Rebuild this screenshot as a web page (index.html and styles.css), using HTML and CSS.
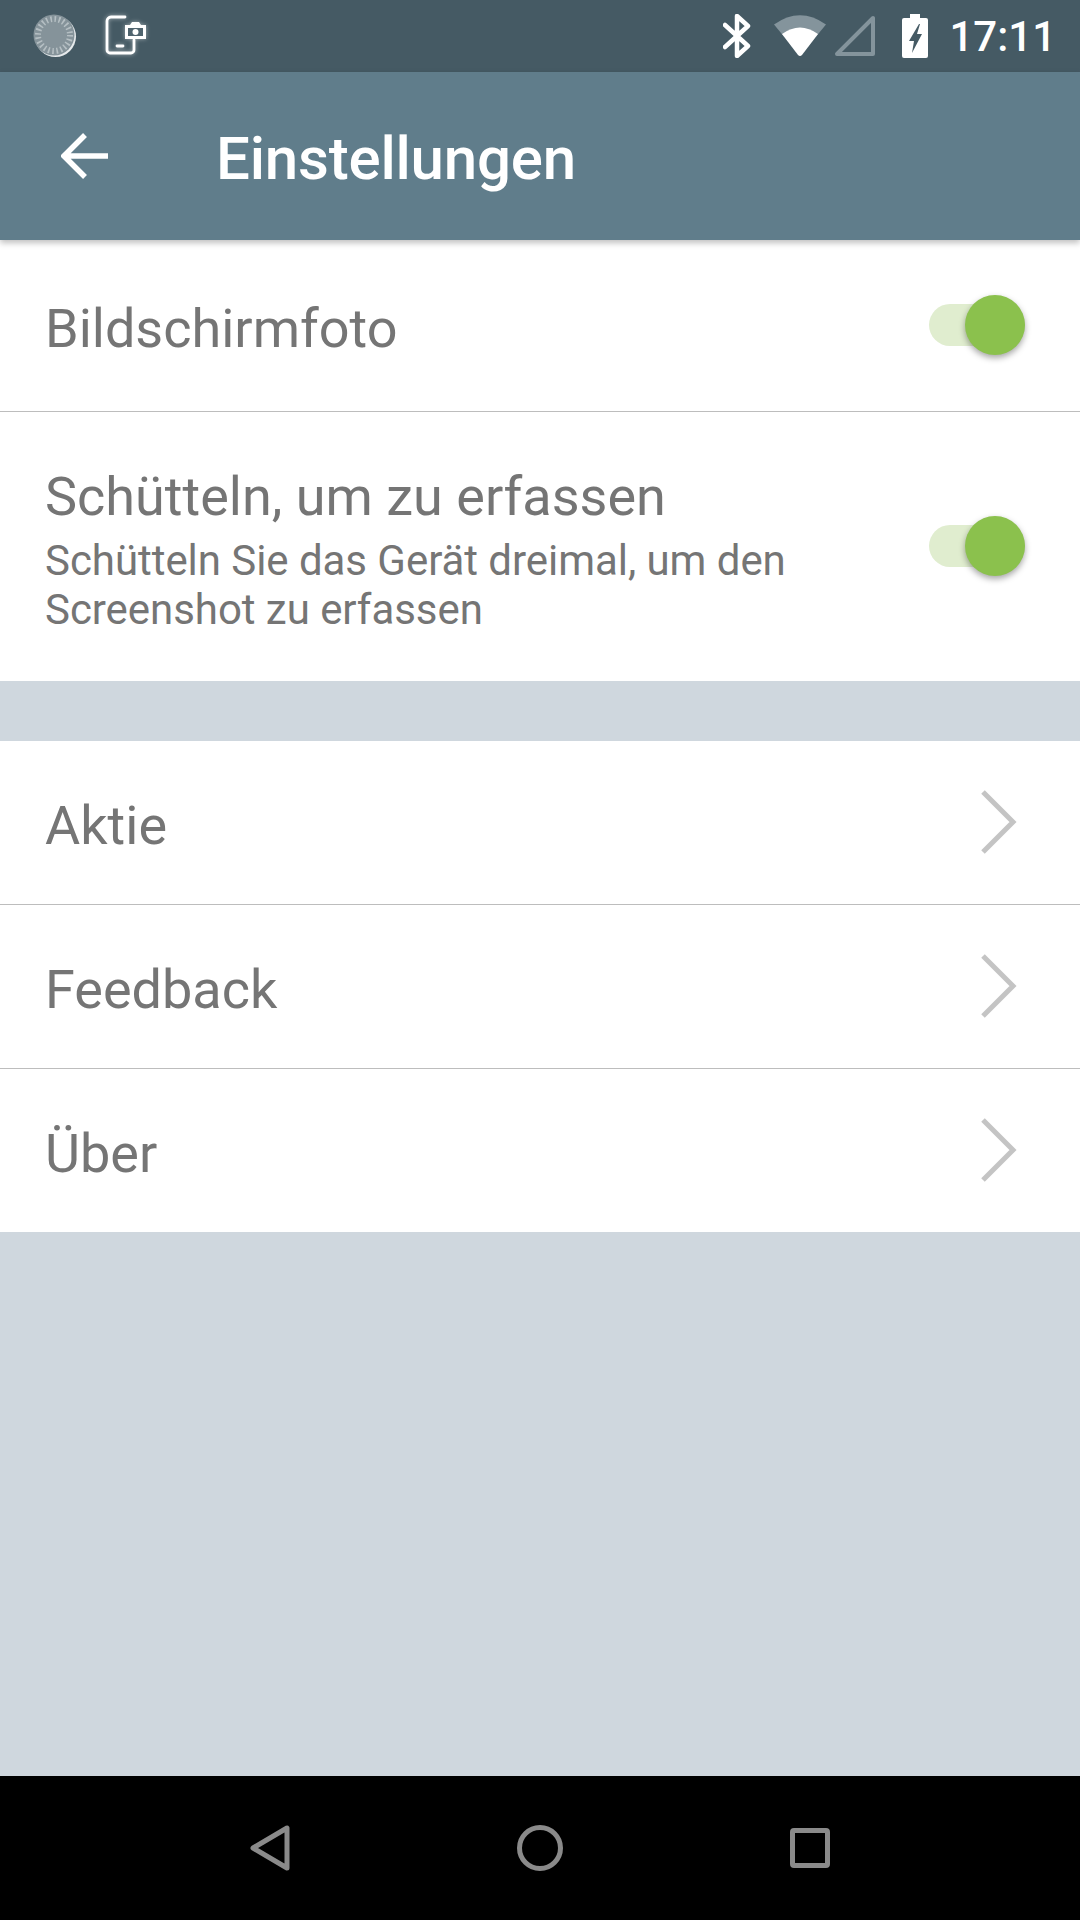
FILE: index.html
```html
<!DOCTYPE html>
<html lang="de">
<head>
    <meta charset="UTF-8">
    <meta name="viewport" content="width=device-width, initial-scale=1.0">
    <title>Einstellungen</title>
    <link rel="stylesheet" href="styles.css">
</head>
<body>
    <div class="screen">
        <div class="status-bar">
            <svg class="ic-spinner" width="44" height="44" viewBox="0 0 44 44">
                <circle cx="22.500" cy="22.500" r="20.500" fill="#e6eaec"/>
                <circle cx="21" cy="21" r="20.500" fill="#85939a"/>
                <circle cx="21" cy="21" r="16" fill="none" stroke="#b5bfc3" stroke-width="6" stroke-dasharray="1.600 2.590"/>
            </svg>
            <svg class="ic-shot" width="42" height="42" viewBox="0 0 42 42">
                <path d="M20 2H6a4 4 0 0 0-4 4v29a3 3 0 0 0 3 3h21a3 3 0 0 0 3-3V25" fill="none" stroke="#fff" stroke-width="2.800" stroke-linecap="round"/>
                <path d="M12 31h6" stroke="#fff" stroke-width="2.800" stroke-linecap="round"/>
                <path d="M20 10h5l2-3h7l2 3h5v14H20z" fill="#fff"/>
                <path d="M23 13h15v8H23z" fill="#4f646e"/>
                <circle cx="30.500" cy="17" r="3" fill="#fff"/>
            </svg>
            <div class="status-right">
                <svg class="ic-bt" width="28" height="44" viewBox="0 0 28 44">
                    <path d="M2 11l23 21-11 10V2l11 10L2 33" fill="none" stroke="#fff" stroke-width="4.500" stroke-linejoin="round" stroke-linecap="round"/>
                </svg>
                <svg class="ic-wifi" width="52" height="42" viewBox="0 0 52 42">
                    <path d="M0 9.500Q26-9 52 9.500L26 41z" fill="#84949c"/>
                    <path d="M8 19Q26 6 44 19L28 40q-2 2-4 0z" fill="#fff"/>
                </svg>
                <svg class="ic-signal" width="42" height="42" viewBox="0 0 42 42">
                    <path d="M39 3v36H3z" fill="none" stroke="#84949c" stroke-width="4" stroke-linejoin="round"/>
                </svg>
                <svg class="ic-batt" width="26" height="44" viewBox="0 0 26 44">
                    <path d="M8 0h10v4h6a2 2 0 0 1 2 2v36a2 2 0 0 1-2 2H2a2 2 0 0 1-2-2V6a2 2 0 0 1 2-2h6z" fill="#fff"/>
                    <path d="M17 10L7 27h5l-2 12 10-19h-5l3-10z" fill="#455a64"/>
                </svg>
                <span class="clock">17:11</span>
            </div>
        </div>

        <div class="app-bar">
            <svg class="back" width="48" height="48" viewBox="0 0 48 48">
                <path d="M47 24H3M24 3L3 24l21 21" fill="none" stroke="#fff" stroke-width="5.500"/>
            </svg>
            <h1>Einstellungen</h1>
        </div>

        <div class="group">
            <div class="row row-first">
                <span class="label">Bildschirmfoto</span>
                <div class="toggle"><div class="thumb"></div></div>
            </div>
            <div class="row row-tall">
                <div class="text">
                    <span class="label">Schütteln, um zu erfassen</span>
                    <p class="sub">Schütteln Sie das Gerät dreimal, um den Screenshot zu erfassen</p>
                </div>
                <div class="toggle"><div class="thumb"></div></div>
            </div>
        </div>

        <div class="group group-links">
            <div class="row row-link">
                <span class="label">Aktie</span>
                <svg class="chevron" width="38" height="64" viewBox="0 0 38 64"><path d="M3 2l30 30L3 62" fill="none" stroke="#c4c4c4" stroke-width="5"/></svg>
            </div>
            <div class="row row-link">
                <span class="label">Feedback</span>
                <svg class="chevron" width="38" height="64" viewBox="0 0 38 64"><path d="M3 2l30 30L3 62" fill="none" stroke="#c4c4c4" stroke-width="5"/></svg>
            </div>
            <div class="row row-link">
                <span class="label">Über</span>
                <svg class="chevron" width="38" height="64" viewBox="0 0 38 64"><path d="M3 2l30 30L3 62" fill="none" stroke="#c4c4c4" stroke-width="5"/></svg>
            </div>
        </div>

        <div class="filler"></div>

        <div class="nav-bar">
            <svg width="40" height="46" viewBox="0 0 40 46"><path d="M37 3v40L3 23z" fill="none" stroke="#8a8a8a" stroke-width="5" stroke-linejoin="round"/></svg>
            <svg width="46" height="46" viewBox="0 0 46 46"><circle cx="23" cy="23" r="20.500" fill="none" stroke="#8a8a8a" stroke-width="5"/></svg>
            <svg width="40" height="40" viewBox="0 0 40 40"><rect x="2.500" y="2.500" width="35" height="35" rx="1.500" fill="none" stroke="#8a8a8a" stroke-width="5"/></svg>
        </div>
    </div>
</body>
</html>
```

FILE: styles.css
```css
body {
    margin: 0;
    font-family: Roboto, 'Noto Sans', sans-serif;
    background: #cfd7de;
}

.screen {
    display: flex;
    flex-direction: column;
    width: 1080px;
    height: 1920px;
    overflow: hidden;
}

.status-bar {
    display: flex;
    align-items: center;
    height: 72px;
    padding: 0 24px 0 33px;
    background: #455a64;
    flex-shrink: 0;
}

.ic-shot {
    margin-left: 28px;
    filter: drop-shadow(0 0 2px rgba(255, 255, 255, 0.5));
}

.status-right {
    display: flex;
    align-items: center;
    margin-left: auto;
}

.ic-bt {
    margin-right: 23px;
}

.ic-wifi {
    margin-right: 8px;
}

.ic-signal {
    margin-right: 26px;
}

.ic-batt {
    margin-right: 21px;
}

.clock {
    color: #fff;
    font-size: 42px;
    font-weight: 500;
}

.app-bar {
    display: flex;
    align-items: center;
    height: 168px;
    padding-left: 61px;
    background: #607d8b;
    box-shadow: 0 3px 6px rgba(0, 0, 0, 0.25);
    position: relative;
    flex-shrink: 0;
}

.app-bar h1 {
    margin: 4px 0 0 107px;
    color: #fff;
    font-size: 60px;
    font-weight: 500;
    letter-spacing: -0.2px;
}

.group {
    background: #fff;
}

.group-links {
    margin-top: 60px;
}

.row {
    display: flex;
    align-items: center;
    justify-content: space-between;
    padding: 0 55px 0 45px;
    border-bottom: 1px solid #bdbdbd;
    box-sizing: border-box;
}

.row:last-child {
    border-bottom: none;
}

.row > .label {
    padding-top: 6px;
}

.row-first {
    height: 172px;
}

.row-first .toggle {
    margin-bottom: 2px;
}

.row-tall {
    height: 269px;
}

.row-tall .toggle {
    margin-bottom: 1px;
}

.row-tall .text {
    padding-top: 5px;
}

.row-link {
    height: 164px;
    padding-right: 62px;
}

.row-link:last-child {
    height: 163px;
}

.chevron {
    margin-bottom: 2px;
}

.label {
    color: #757575;
    font-size: 54px;
}

.sub {
    width: 800px;
    margin: 8px 0 0;
    color: #757575;
    font-size: 42px;
    line-height: 49px;
    letter-spacing: -0.05px;
}

.toggle {
    position: relative;
    width: 96px;
    height: 42px;
    border-radius: 21px;
    background: #e0edcf;
}

.thumb {
    position: absolute;
    top: -9px;
    right: 0;
    width: 60px;
    height: 60px;
    border-radius: 50%;
    background: #8bc14d;
    box-shadow: 0 3px 6px rgba(0, 0, 0, 0.35);
}

.filler {
    flex: 1;
}

.nav-bar {
    display: flex;
    align-items: center;
    justify-content: space-between;
    height: 144px;
    padding: 0 250px;
    background: #000;
    flex-shrink: 0;
}
```
